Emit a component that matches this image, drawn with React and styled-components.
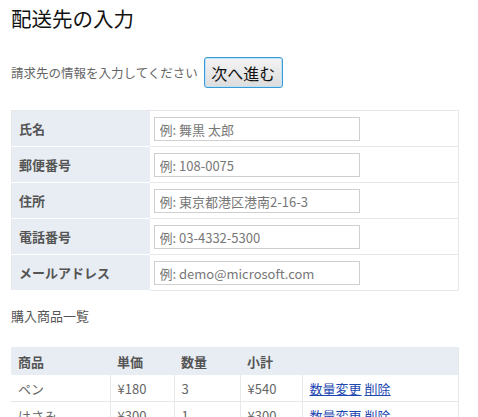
import React from "react";
import styled, { createGlobalStyle } from "styled-components";

const Global = createGlobalStyle`
  html, body { margin: 0; padding: 0; background: #fff; }
  body { font-family: "Noto Sans CJK JP", "Noto Sans", sans-serif; color: #555; }
`;

const Page = styled.div`
  padding: 0 11px;
  width: 448px;
`;

const Title = styled.h1`
  margin: 4px 0 0;
  font-size: 20.5px;
  line-height: 28px;
  font-weight: normal;
  color: #111;
`;

const Lead = styled.div`
  margin-top: 25px;
  display: flex;
  align-items: center;
  gap: 6px;
  font-size: 12.5px;
  color: #666;
`;

const NextButton = styled.button`
  height: 31px;
  width: 79px;
  padding: 0;
  font-family: inherit;
  font-size: 16px;
  color: #111;
  border: 1px solid #3a9ad3;
  border-radius: 3px;
  background: linear-gradient(#f4f4f4, #dcdcdc);
  box-shadow: inset 0 0 0 1px #bfe3f6;
`;

const FormTable = styled.table`
  margin-top: 22px;
  width: 448px;
  border-collapse: collapse;
  table-layout: fixed;
  border: 1px solid #e6e8ea;
`;

const Label = styled.th`
  height: 35px;
  padding: 0 0 0 7px;
  text-align: left;
  background: #e8edf3;
  font-size: 13px;
  font-weight: bold;
  color: #555;
  border-bottom: 1px solid #fff;
`;

const Field = styled.td`
  padding: 0 4px;
  border-bottom: 1px solid #e6e8ea;
`;

const Input = styled.input`
  box-sizing: border-box;
  width: 206px;
  height: 24px;
  border: 1px solid #cfcfcf;
  padding: 0 5px;
  font-family: inherit;
  font-size: 13px;
  color: #333;
  &::placeholder { color: #777; }
`;

const Section = styled.div`
  margin-top: 16px;
  font-size: 13px;
  line-height: 18px;
  color: #555;
`;

const ItemTable = styled.table`
  margin-top: 22px;
  width: 448px;
  border-collapse: collapse;
  table-layout: fixed;
  border-right: 1px solid #e6e8ea;
  font-size: 13px;
`;

const Head = styled.th`
  height: 28px;
  padding: 0 7px;
  text-align: left;
  background: #e8edf3;
  font-weight: bold;
  color: #555;
`;

const Cell = styled.td`
  height: 26px;
  padding: 0 7px;
  color: #666;
  border-bottom: 1px solid #e6e8ea;
  border-left: 1px solid #e6e8ea;
  &:first-child { border-left: none; }
`;

const Link = styled.a`
  color: #1d47b0;
  text-decoration: underline;
  margin-right: 3px;
`;

const fields = [
  ["氏名", "例: 舞黒 太郎"],
  ["郵便番号", "例: 108-0075"],
  ["住所", "例: 東京都港区港南2-16-3"],
  ["電話番号", "例: 03-4332-5300"],
  ["メールアドレス", "例: demo@microsoft.com"],
];

const items = [
  ["ペン", "¥180", "3", "¥540"],
  ["はさみ", "¥300", "1", "¥300"],
];

export default function App() {
  return (
    <Page>
      <Global />
      <Title>配送先の入力</Title>
      <Lead>
        <span>請求先の情報を入力してください</span>
        <NextButton>次へ進む</NextButton>
      </Lead>
      <FormTable>
        <colgroup>
          <col style={{ width: 138 }} />
          <col />
        </colgroup>
        <tbody>
          {fields.map(([l, p]) => (
            <tr key={l}>
              <Label>{l}</Label>
              <Field>
                <Input placeholder={p} />
              </Field>
            </tr>
          ))}
        </tbody>
      </FormTable>
      <Section>購入商品一覧</Section>
      <ItemTable>
        <colgroup>
          <col style={{ width: 99 }} />
          <col style={{ width: 64 }} />
          <col style={{ width: 66 }} />
          <col style={{ width: 62 }} />
          <col />
        </colgroup>
        <thead>
          <tr>
            <Head>商品</Head>
            <Head>単価</Head>
            <Head>数量</Head>
            <Head>小計</Head>
            <Head></Head>
          </tr>
        </thead>
        <tbody>
          {items.map(([n, u, q, s]) => (
            <tr key={n}>
              <Cell>{n}</Cell>
              <Cell>{u}</Cell>
              <Cell>{q}</Cell>
              <Cell>{s}</Cell>
              <Cell>
                <Link href="#">数量変更</Link>
                <Link href="#">削除</Link>
              </Cell>
            </tr>
          ))}
        </tbody>
      </ItemTable>
    </Page>
  );
}
